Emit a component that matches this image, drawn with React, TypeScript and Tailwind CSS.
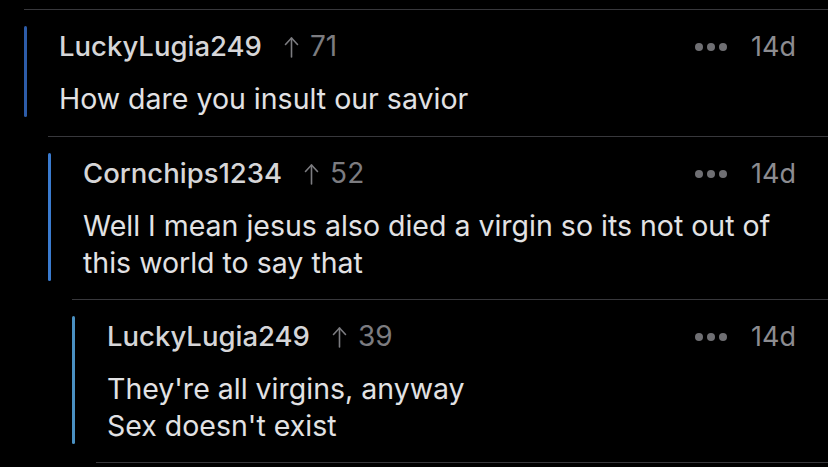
import React from "react";

type Comment = {
  user: string;
  score: number;
  age: string;
  lines: string[];
  indent: string;
  bar: string;
  pad: string;
};

const comments: Comment[] = [
  {
    user: "LuckyLugia249",
    score: 71,
    age: "14d",
    lines: ["How dare you insult our savior"],
    indent: "ml-6",
    bar: "bg-[#2d5ca8]",
    pad: "pb-[19px]",
  },
  {
    user: "Cornchips1234",
    score: 52,
    age: "14d",
    lines: [
      "Well I mean jesus also died a virgin so its not out of",
      "this world to say that",
    ],
    indent: "ml-12",
    bar: "bg-[#3a7bcf]",
    pad: "pb-[18px]",
  },
  {
    user: "LuckyLugia249",
    score: 39,
    age: "14d",
    lines: ["They're all virgins, anyway", "Sex doesn't exist"],
    indent: "ml-18",
    bar: "bg-[#4a90c2]",
    pad: "pb-[18px]",
  },
];

function UpArrow() {
  return (
    <svg width="15" height="24" viewBox="0 0 15 24" fill="none" stroke="currentColor" strokeWidth={1.6} strokeLinecap="round" strokeLinejoin="round">
      <path d="M7.5 22V3" />
      <path d="M1.5 9.5L7.5 3l6 6.5" />
    </svg>
  );
}

function MoreDots() {
  return (
    <div className="flex items-center gap-[4px]">
      <span className="w-2 h-2 rounded-full bg-[#6f6f73]" />
      <span className="w-2 h-2 rounded-full bg-[#6f6f73]" />
      <span className="w-2 h-2 rounded-full bg-[#6f6f73]" />
    </div>
  );
}

function CommentRow({ c }: { c: Comment }) {
  return (
    <div className={`${c.indent} ${c.pad} border-t border-[#38383c] pt-4 pr-8 flex`}>
      <div className={`w-[3px] rounded-full self-stretch ${c.bar}`} />
      <div className="flex-1 ml-8 pt-[2px]">
        {/* header */}
        <div className="h-[37px] flex items-center justify-between text-[27.5px]">
          <div className="flex items-center">
            <span className="text-[#d6d6d8] font-medium">{c.user}</span>
            <span className="ml-[22px] text-[#7c7c80]">
              <UpArrow />
            </span>
            <span className="ml-[11px] text-[#7c7c80] text-[28px]">{c.score}</span>
          </div>
          <div className="flex items-center gap-6 text-[27px]">
            <MoreDots />
            <span className="text-[#8c8c90]">{c.age}</span>
          </div>
        </div>
        {/* body */}
        <p className="mt-[15px] text-[#e2e2e4] text-[28.5px] leading-[37px]">
          {c.lines.map((line, i) => (
            <React.Fragment key={i}>
              {i > 0 && <br />}
              {line}
            </React.Fragment>
          ))}
        </p>
      </div>
    </div>
  );
}

export default function App() {
  return (
    <div
      className="w-[828px] h-[467px] bg-black pt-[9px] overflow-hidden leading-[37px]"
      style={{ fontFamily: "Inter, 'Noto Sans', sans-serif" }}
    >
      {comments.map((c, i) => (
        <CommentRow key={i} c={c} />
      ))}
      <div className="ml-24 border-t border-[#38383c]" />
    </div>
  );
}
